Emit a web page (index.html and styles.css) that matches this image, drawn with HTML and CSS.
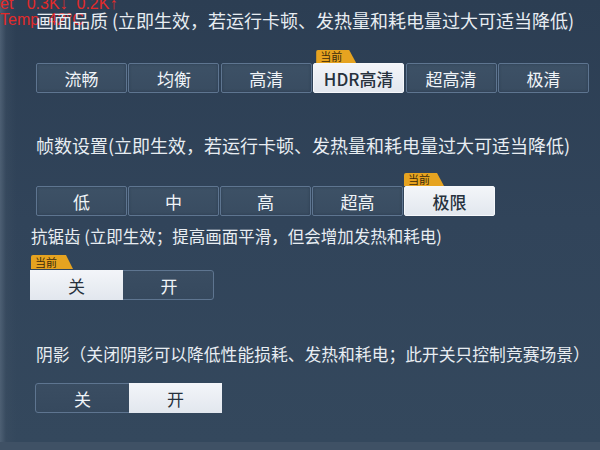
FILE: index.html
```html
<!DOCTYPE html>
<html lang="zh-CN">
<head>
<meta charset="utf-8">
<title>画面设置</title>
<link rel="stylesheet" href="styles.css">
</head>
<body>
<div class="screen">
  <div class="debug">et   0.3K↓  0.2K↑
Temp  42°C</div>

  <section class="sec s1">
    <h2 class="title">画面品质 (立即生效，若运行卡顿、发热量和耗电量过大可适当降低)</h2>
    <div class="opts six">
      <div class="opt">流畅</div>
      <div class="opt">均衡</div>
      <div class="opt">高清</div>
      <div class="opt on"><span class="tag">当前</span>HDR高清</div>
      <div class="opt">超高清</div>
      <div class="opt">极清</div>
    </div>
  </section>

  <section class="sec s2">
    <h2 class="title">帧数设置(立即生效，若运行卡顿、发热量和耗电量过大可适当降低)</h2>
    <div class="opts five">
      <div class="opt">低</div>
      <div class="opt">中</div>
      <div class="opt">高</div>
      <div class="opt">超高</div>
      <div class="opt on"><span class="tag">当前</span>极限</div>
    </div>
  </section>

  <section class="sec s3">
    <h2 class="title small">抗锯齿 (立即生效；提高画面平滑，但会增加发热和耗电)</h2>
    <div class="seg">
      <div class="half on"><span class="tag">当前</span>关</div>
      <div class="half">开</div>
    </div>
  </section>

  <section class="sec s4">
    <h2 class="title mid">阴影（关闭阴影可以降低性能损耗、发热和耗电；此开关只控制竞赛场景）</h2>
    <div class="seg wide">
      <div class="half">关</div>
      <div class="half on">开</div>
    </div>
  </section>
</div>
</body>
</html>
```

FILE: styles.css
```css
* { box-sizing: border-box; }
html, body { margin: 0; padding: 0; }
body {
  width: 600px;
  height: 450px;
  overflow: hidden;
  background: #3f5165;
  font-family: "Noto Sans CJK SC", "Noto Sans", sans-serif;
}
.screen {
  position: relative;
  width: 600px;
  height: 442px;
  padding-top: 8px;
  background:
    linear-gradient(to right, rgba(80,98,118,0.9) 0px, rgba(60,78,98,0.5) 6px, rgba(47,65,86,0) 16px),
    linear-gradient(to bottom, #2c3e53 0%, #31445a 50%, #34485d 100%);
}
.debug {
  position: absolute;
  left: 0;
  top: -4px;
  color: #e22a2a;
  font-family: "Liberation Sans", Arial, sans-serif;
  font-size: 16px;
  line-height: 16px;
  white-space: pre;
  z-index: 0;
}
.sec { position: relative; z-index: 1; padding-left: 36px; }
.title {
  margin: 0;
  font-weight: normal;
  font-size: 18px;
  line-height: 24px;
  color: #e8edf2;
  white-space: nowrap;
}
.title.small { font-size: 16.5px; }
.title.mid { font-size: 16.8px; }

.s1 .opts { margin-top: 31px; }
.s2 { margin-top: 40px; }
.s2 .opts { margin-top: 29px; }
.s3 { margin-top: 8px; padding-left: 30px; }
.s3 .title { padding-left: 1px; }
.s3 .seg { margin-top: 22px; }
.s4 { margin-top: 42px; padding-left: 35px; }
.s4 .title { padding-left: 1px; }
.s4 .seg { margin-top: 17px; }

.opts { display: grid; height: 30px; }
.opts.six { grid-template-columns: repeat(6, 91px); column-gap: 1.4px; }
.opts.five { grid-template-columns: repeat(5, 91px); column-gap: 1px; }

.opt {
  position: relative;
  display: flex;
  align-items: center;
  justify-content: center;
  background: linear-gradient(to bottom, #3d5166, #394c61);
  border: 1px solid #5e7590;
  border-radius: 2px;
  color: #f0f4f8;
  font-size: 17px;
  box-shadow: inset 0 0 3px rgba(20,30,45,0.35);
}
.opt.on, .half.on {
  background: linear-gradient(to bottom, #f3f5f9, #e2e7ee);
  border-color: #f6f8fb;
  color: #27313d;
  box-shadow: none;
}
.opt.on { font-weight: 500; }

.tag {
  position: absolute;
  left: 2px;
  top: -14px;
  height: 13px;
  width: 40px;
  padding-left: 4px;
  background: #e6a320;
  color: #3b2a0c;
  font-size: 11px;
  line-height: 13px;
  font-weight: normal;
  text-align: left;
  border-top-left-radius: 2px;
  clip-path: polygon(0 0, calc(100% - 7px) 0, 100% 100%, 0 100%);
}
.five .tag { left: -1px; }

.seg {
  display: grid;
  grid-template-columns: 92px 92px;
  height: 30px;
  width: 184px;
  border: 1px solid #5e7590;
  border-radius: 3px;
  background: linear-gradient(to bottom, #3a4d62, #36495e);
}
.seg.wide { grid-template-columns: 93px 92px; width: 185px; }
.half {
  position: relative;
  display: flex;
  align-items: center;
  justify-content: center;
  color: #f0f4f8;
  font-size: 17px;
}
.seg .half.on { border: none; }
.s3 .seg .half.on { margin: -1px 0 -1px -1px; }
.s3 .tag { left: 1px; top: -15px; height: 14px; width: 42px; line-height: 14px; }
.s4 .seg .half.on { margin: -1px -1px -1px 0; }
```
